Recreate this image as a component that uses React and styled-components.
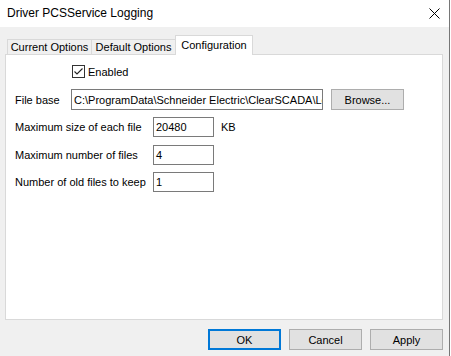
import React from 'react'
import styled, { createGlobalStyle } from 'styled-components';

const Global = createGlobalStyle`
  html, body {
    margin: 0;
    padding: 0;
    background: #ffffff;
  }
`;

const Window = styled.div`
  width: 449px;
  height: 356px;
  border-right: 1px solid #767676;
  background-color: #f0f0f0;
  font-family: "Liberation Sans", Arial, sans-serif;
  font-size: 11px;
  color: #000;
  display: flex;
  flex-direction: column;
  overflow: hidden;
`;

const TitleBar = styled.div`
  height: 26px;
  background-color: #ffffff;
  display: flex;
  align-items: center;
  justify-content: space-between;
  padding: 0 9px 1px 7px;
  font-size: 12px;
  flex-shrink: 0;
`;

const Body = styled.div`
  padding: 8px 6px 0 5px;
  display: flex;
  flex-direction: column;
`;

const TabRow = styled.div`
  display: flex;
  align-items: flex-end;
  padding-left: 2px;
  height: 19px;
`;

const Tab = styled.div`
  box-sizing: border-box;
  height: ${({active})=>active ? '20px' : '15px'};
  margin-bottom: ${({active})=>active ? '-1px' : '0'};
  margin-left: ${({first})=>first ? '0' : '-1px'};
  width: ${({w})=>w}px;
  border: 1px solid #d9d9d9;
  border-bottom: none;
  background-color: ${({active})=>active ? '#ffffff' : '#f0f0f0'};
  display: flex;
  align-items: center;
  justify-content: center;
  padding-bottom: ${({active})=>active ? '2px' : '0'};
  position: relative;
  z-index: ${({active})=>active ? 1 : 0};
`;

const Panel = styled.div`
  box-sizing: border-box;
  width: 438px;
  height: 266px;
  border: 1px solid #d9d9d9;
  background-color: #ffffff;
  padding: 10px 0 0 9px;
  display: flex;
  flex-direction: column;
`;

const Row = styled.div`
  display: flex;
  align-items: center;
  height: ${({h})=>h}px;
  margin-top: ${({mt})=>mt || 0}px;
`;

const Label = styled.div`
  width: ${({w})=>w}px;
  flex-shrink: 0;
  white-space: nowrap;
`;

const CheckWrap = styled.label`
  display: flex;
  align-items: center;
  gap: 3px;
  margin-left: 57px;
`;

const Box = styled.span`
  box-sizing: border-box;
  width: 13px;
  height: 13px;
  border: 1px solid #333333;
  background: #fff;
  display: flex;
  align-items: center;
  justify-content: center;
`;

const Field = styled.div`
  box-sizing: border-box;
  width: ${({w})=>w}px;
  height: ${({h})=>h || 20}px;
  border: 1px solid #7a7a7a;
  background: #fff;
  padding: 0 2px;
  display: flex;
  align-items: center;
  white-space: nowrap;
  overflow: hidden;
`;

const Unit = styled.span`
  margin-left: 7px;
`;

const Button = styled.div`
  box-sizing: border-box;
  width: ${({w})=>w || 73}px;
  height: ${({h})=>h || 21}px;
  margin-left: ${({ml})=>ml || 0}px;
  border: ${({primary})=>primary ? '2px solid #0078d7' : '1px solid #adadad'};
  background-color: #e1e1e1;
  display: flex;
  align-items: center;
  justify-content: center;
  flex-shrink: 0;
`;

const Footer = styled.div`
  display: flex;
  justify-content: flex-end;
  gap: 8px;
  margin-top: 9px;
  width: 438px;
`;

const CloseIcon = () => (
  <svg width="11" height="11" viewBox="0 0 11 11">
    <path d="M0.5 0.5 L10.5 10.5 M10.5 0.5 L0.5 10.5" stroke="#000" strokeWidth="1" fill="none"/>
  </svg>
);

const Tick = () => (
  <svg width="11" height="11" viewBox="0 0 11 11">
    <path d="M1.5 5.5 L4 8 L9.5 2.5" stroke="#222" strokeWidth="1.1" fill="none"/>
  </svg>
);

export default function App() {
  return (
    <Window>
      <Global/>
      <TitleBar>
        <span>Driver PCSService Logging</span>
        <CloseIcon/>
      </TitleBar>
      <Body>
        <TabRow>
          <Tab first w={85}>Current Options</Tab>
          <Tab w={85}>Default Options</Tab>
          <Tab active w={78}>Configuration</Tab>
        </TabRow>
        <Panel>
          <Row h={13}>
            <CheckWrap>
              <Box><Tick/></Box>
              Enabled
            </CheckWrap>
          </Row>
          <Row h={21} mt={11}>
            <Label w={56}>File base</Label>
            <Field w={252} h={21}>C:\ProgramData\Schneider Electric\ClearSCADA\Logs</Field>
            <Button w={73} ml={8}>Browse...</Button>
          </Row>
          <Row h={20} mt={7}>
            <Label w={138}>Maximum size of each file</Label>
            <Field w={61}>20480</Field>
            <Unit>KB</Unit>
          </Row>
          <Row h={20} mt={8}>
            <Label w={138}>Maximum number of files</Label>
            <Field w={61}>4</Field>
          </Row>
          <Row h={20} mt={7}>
            <Label w={138}>Number of old files to keep</Label>
            <Field w={61}>1</Field>
          </Row>
        </Panel>
        <Footer>
          <Button primary>OK</Button>
          <Button>Cancel</Button>
          <Button>Apply</Button>
        </Footer>
      </Body>
    </Window>
  )
}
